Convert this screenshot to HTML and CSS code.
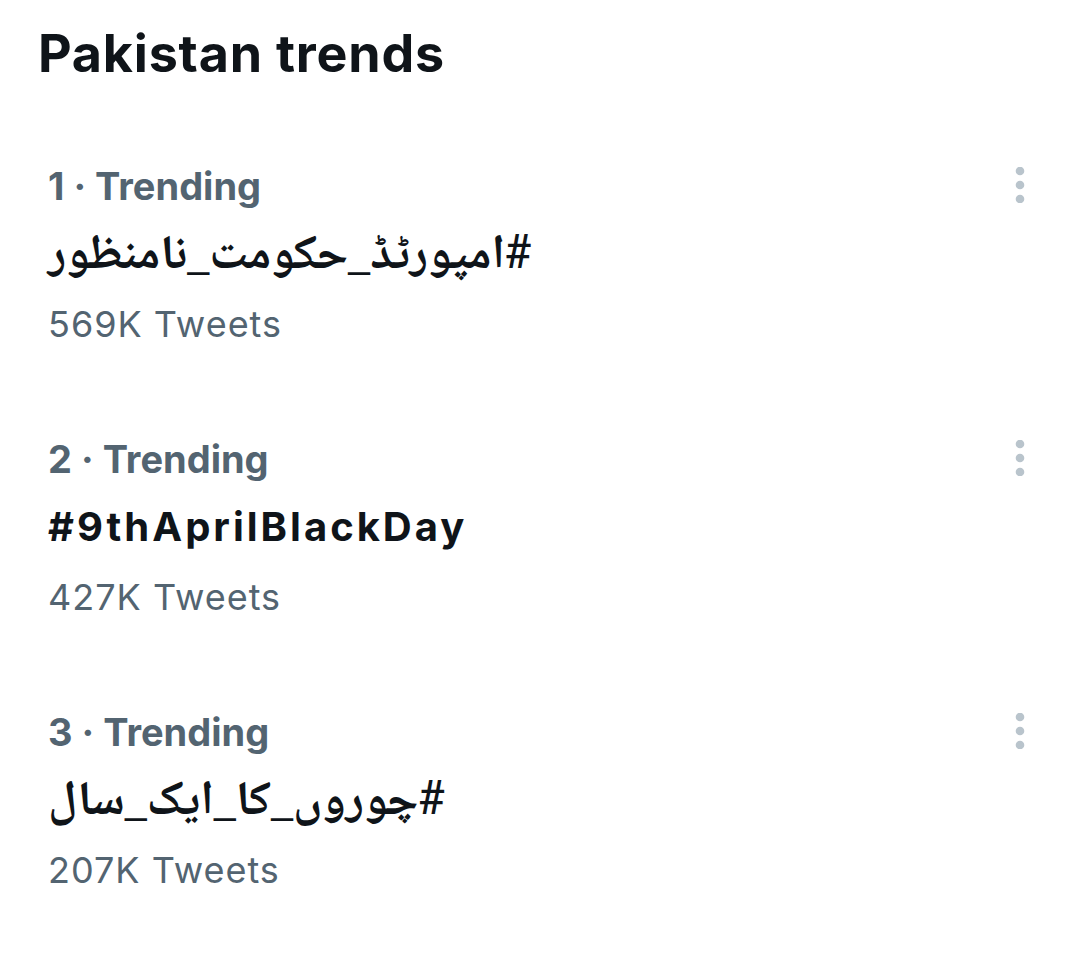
FILE: index.html
```html
<!DOCTYPE html>
<html>
<head>
<meta charset="utf-8">
<link rel="stylesheet" href="styles.css">
</head>
<body>
<main class="panel">
  <h1 class="title">Pakistan trends</h1>
  <ul class="trends">
    <li class="trend">
      <div class="trend-body">
        <div class="meta">1 · Trending</div>
        <div class="name"><span class="rtl" dir="rtl">#امپورٹڈ_حکومت_نامنظور</span></div>
        <div class="count">569K Tweets</div>
      </div>
      <svg class="more" viewBox="0 0 12 36" width="12" height="36"><circle cx="6" cy="4" r="4.3"/><circle cx="6" cy="18" r="4.3"/><circle cx="6" cy="32" r="4.3"/></svg>
    </li>
    <li class="trend">
      <div class="trend-body">
        <div class="meta">2 · Trending</div>
        <div class="name latin">#9thAprilBlackDay</div>
        <div class="count">427K Tweets</div>
      </div>
      <svg class="more" viewBox="0 0 12 36" width="12" height="36"><circle cx="6" cy="4" r="4.3"/><circle cx="6" cy="18" r="4.3"/><circle cx="6" cy="32" r="4.3"/></svg>
    </li>
    <li class="trend">
      <div class="trend-body">
        <div class="meta">3 · Trending</div>
        <div class="name"><span class="rtl" dir="rtl">#چوروں_کا_ایک_سال</span></div>
        <div class="count">207K Tweets</div>
      </div>
      <svg class="more" viewBox="0 0 12 36" width="12" height="36"><circle cx="6" cy="4" r="4.3"/><circle cx="6" cy="18" r="4.3"/><circle cx="6" cy="32" r="4.3"/></svg>
    </li>
  </ul>
</main>
</body>
</html>
```
FILE: styles.css
```css
html, body {
  margin: 0;
  padding: 0;
  background: #ffffff;
}
body {
  font-family: "Inter", "DejaVu Sans", sans-serif;
  color: #0f1419;
}
.panel {
  width: 1080px;
  height: 974px;
}
.title {
  margin: 0;
  padding: 22px 0 0 38px;
  font-size: 52px;
  font-weight: 700;
  line-height: 64px;
  letter-spacing: 0.8px;
}
.trends {
  list-style: none;
  margin: 76px 0 0 0;
  padding: 0;
}
.trend {
  display: flex;
  justify-content: space-between;
  align-items: flex-start;
  padding: 0 54px 0 48px;
  height: 273px;
}
.trend-body {
  display: flex;
  flex-direction: column;
}
.meta {
  color: #536471;
  font-size: 38px;
  font-weight: 700;
  line-height: 48px;
}
.name {
  margin-top: 6px;
  height: 76px;
  font-size: 40px;
  font-weight: 700;
  line-height: 76px;
  white-space: nowrap;
}
.latin {
  letter-spacing: 3px;
}
.rtl {
  font-family: "Noto Naskh Arabic", "Noto Sans Arabic", "DejaVu Sans", sans-serif;
  font-size: 48px;
}
.count {
  margin-top: 8px;
  color: #536471;
  font-size: 36px;
  line-height: 48px;
  letter-spacing: 1px;
}
.more {
  margin-top: 5px;
  fill: #b9c4cc;
}
```
